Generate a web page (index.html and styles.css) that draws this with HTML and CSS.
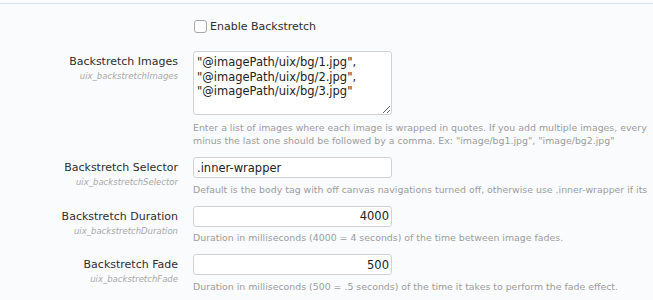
FILE: index.html
```html
<!DOCTYPE html>
<html lang="en">
<head>
    <meta charset="UTF-8">
    <meta name="viewport" content="width=device-width, initial-scale=1.0">
    <title>Backstretch Options</title>
    <link rel="stylesheet" href="styles.css">
</head>
<body>
    <div class="topline"></div>
    <form class="options">
        <div class="row row-check">
            <div class="label-col"></div>
            <div class="control-col">
                <label class="check">
                    <input type="checkbox" name="uix_backstretch">
                    <span>Enable Backstretch</span>
                </label>
            </div>
        </div>

        <div class="row">
            <div class="label-col">
                <label for="uix_backstretchImages">Backstretch Images</label>
                <span class="option-id">uix_backstretchImages</span>
            </div>
            <div class="control-col">
                <textarea id="uix_backstretchImages" class="textbox">"@imagePath/uix/bg/1.jpg",
"@imagePath/uix/bg/2.jpg",
"@imagePath/uix/bg/3.jpg"</textarea>
                <p class="explain">Enter a list of images where each image is wrapped in quotes. If you add multiple images, every<br>minus the last one should be followed by a comma. Ex: "image/bg1.jpg", "image/bg2.jpg"</p>
            </div>
        </div>

        <div class="row">
            <div class="label-col">
                <label for="uix_backstretchSelector">Backstretch Selector</label>
                <span class="option-id">uix_backstretchSelector</span>
            </div>
            <div class="control-col">
                <input type="text" id="uix_backstretchSelector" class="textbox" value=".inner-wrapper">
                <p class="explain">Default is the body tag with off canvas navigations turned off, otherwise use .inner-wrapper if its</p>
            </div>
        </div>

        <div class="row">
            <div class="label-col">
                <label for="uix_backstretchDuration">Backstretch Duration</label>
                <span class="option-id">uix_backstretchDuration</span>
            </div>
            <div class="control-col">
                <input type="text" id="uix_backstretchDuration" class="textbox number" value="4000">
                <p class="explain">Duration in milliseconds (4000 = 4 seconds) of the time between image fades.</p>
            </div>
        </div>

        <div class="row">
            <div class="label-col">
                <label for="uix_backstretchFade">Backstretch Fade</label>
                <span class="option-id">uix_backstretchFade</span>
            </div>
            <div class="control-col">
                <input type="text" id="uix_backstretchFade" class="textbox number" value="500">
                <p class="explain">Duration in milliseconds (500 = .5 seconds) of the time it takes to perform the fade effect.</p>
            </div>
        </div>
    </form>
</body>
</html>
```

FILE: styles.css
```css
html {
    overflow: hidden;
}
body {
    font-family: "DejaVu Sans", Verdana, sans-serif;
    font-size: 11px;
    color: #2b2b2b;
    margin: 0;
    padding: 0;
    background-color: #fafbfd;
}
.topline {
    height: 3px;
    border-bottom: 1px solid #dbe3ea;
}
.options {
    margin: 0;
}
.row {
    display: grid;
    grid-template-columns: 178px 1fr;
    column-gap: 15px;
    margin-bottom: 10px;
}
.row-check {
    padding-top: 14px;
    margin-bottom: 17px;
}
.label-col {
    text-align: right;
    padding-top: 2px;
}
.label-col label {
    display: block;
    line-height: 18px;
    color: #2e2e2e;
}
.option-id {
    display: block;
    font-size: 8.5px;
    line-height: 10px;
    font-style: italic;
    color: #a8a8a8;
}
.control-col {
    min-width: 0;
}
.check {
    display: flex;
    align-items: center;
    height: 16px;
    color: #2e2e2e;
}
.check input {
    appearance: none;
    width: 13px;
    height: 13px;
    margin: 0 3px 0 1px;
    border: 1px solid #a6a6a6;
    border-radius: 3px;
    background: #fff;
}
.textbox {
    display: block;
    box-sizing: border-box;
    width: 199px;
    height: 21px;
    margin: 0;
    padding: 2px 3px;
    border: 1px solid #d2d2d2;
    border-radius: 3px;
    background: #fff;
    font-family: "DejaVu Sans", Verdana, sans-serif;
    font-size: 11.5px;
    color: #222;
}
textarea.textbox {
    height: 64px;
    line-height: 14.5px;
    padding: 3px 3px;
    margin-bottom: 6px;
    resize: vertical;
}
.number {
    text-align: right;
    padding-right: 2px;
}
.explain {
    margin: 4.5px 0 0;
    font-size: 9.4px;
    line-height: 13px;
    color: #9c9c9c;
    white-space: nowrap;
}
```
